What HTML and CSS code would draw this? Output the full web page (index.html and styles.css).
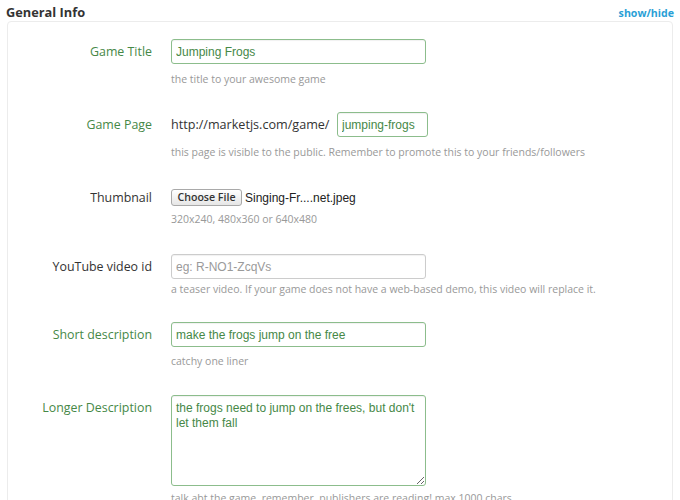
FILE: index.html
```html
<!DOCTYPE html>
<html>
<head>
<meta charset="utf-8">
<link rel="stylesheet" href="styles.css">
</head>
<body>
<div class="page">
  <div class="header">
    <h2 class="title">General Info</h2>
    <a class="toggle" href="#">show/hide</a>
  </div>
  <div class="panel">
    <div class="row">
      <label class="label ok">Game Title</label>
      <div class="control">
        <input class="field ok" type="text" value="Jumping Frogs">
        <div class="help h8">the title to your awesome game</div>
      </div>
    </div>
    <div class="row">
      <label class="label ok">Game Page</label>
      <div class="control">
        <div class="inline">
          <span class="prefix">http://marketjs.com/game/</span>
          <input class="field ok slug" type="text" value="jumping-frogs">
        </div>
        <div class="help h8">this page is visible to the public. Remember to promote this to your friends/followers</div>
      </div>
    </div>
    <div class="row">
      <label class="label">Thumbnail</label>
      <div class="control">
        <div class="file">
          <span class="filebtn">Choose File</span>
          <span class="filename">Singing-Fr....net.jpeg</span>
        </div>
        <div class="help h2">320x240, 480x360 or 640x480</div>
      </div>
    </div>
    <div class="row r28">
      <label class="label">YouTube video id</label>
      <div class="control">
        <input class="field" type="text" placeholder="eg: R-NO1-ZcqVs">
        <div class="help h3">a teaser video. If your game does not have a web-based demo, this video will replace it.</div>
      </div>
    </div>
    <div class="row">
      <label class="label ok">Short description</label>
      <div class="control">
        <input class="field ok" type="text" value="make the frogs jump on the free">
        <div class="help h7">catchy one liner</div>
      </div>
    </div>
    <div class="row r27">
      <label class="label ok">Longer Description</label>
      <div class="control">
        <textarea class="area ok">the frogs need to jump on the frees, but don't let them fall</textarea>
        <div class="help h5">talk abt the game. remember, publishers are reading! max 1000 chars</div>
      </div>
    </div>
  </div>
</div>
</body>
</html>
```
FILE: styles.css
```css
html, body {
  margin: 0;
  padding: 0;
  overflow: hidden;
  background: #fff;
}
.page {
  width: 680px;
  height: 500px;
  padding: 0 7px 0 6px;
  box-sizing: border-box;
  font-family: "Open Sans", "DejaVu Sans", sans-serif;
  color: #333;
}
.header {
  display: flex;
  justify-content: space-between;
  align-items: baseline;
  height: 21px;
  padding-top: 4px;
  box-sizing: border-box;
}
.title {
  margin: 0;
  font-size: 12.8px;
  line-height: 16px;
  font-weight: 700;
  color: #333;
}
.toggle {
  font-size: 10.6px;
  line-height: 16px;
  font-weight: 700;
  color: #2a9fd6;
  text-decoration: none;
  margin-right: -1px;
}
.panel {
  margin-left: 1px;
  border: 1px solid #ececec;
  border-radius: 4px;
  padding: 17px 0 40px 0;
  background: #fff;
}
.row {
  display: flex;
  align-items: flex-start;
  margin-top: 26px;
}
.row:first-child { margin-top: 0; }
.row.r28 { margin-top: 28px; }
.row.r27 { margin-top: 27px; }
.label {
  width: 144px;
  flex: none;
  text-align: right;
  font-size: 12.4px;
  line-height: 25px;
  color: #333;
}
.label.ok { color: #468847; }
.control {
  margin-left: 19px;
  display: flex;
  flex-direction: column;
}
.field {
  box-sizing: border-box;
  width: 255px;
  height: 25px;
  margin: 0;
  padding: 0 4px;
  border: 1px solid #cccccc;
  border-radius: 3px;
  box-shadow: inset 0 1px 1px rgba(0,0,0,0.06);
  font-family: "Liberation Sans", Arial, sans-serif;
  font-size: 12px;
  color: #333;
  outline: none;
}
.field::placeholder { color: #9a9a9a; }
.field.ok, .area.ok {
  border-color: #8cbd8c;
  color: #468847;
}
.inline {
  display: flex;
  align-items: center;
  height: 25px;
}
.prefix {
  font-size: 12.6px;
  color: #333;
  margin-right: 4px;
  width: 162px;
  white-space: nowrap;
}
.field.slug { width: 91px; }
.file {
  display: flex;
  align-items: center;
  height: 25px;
}
.filebtn {
  box-sizing: border-box;
  width: 71px;
  height: 17px;
  border: 1px solid #a9a9a9;
  border-radius: 3px;
  background: linear-gradient(#ffffff, #e6e6e6);
  font-size: 10.6px;
  font-weight: 600;
  line-height: 15px;
  text-align: center;
  color: #333;
}
.filename {
  margin-left: 3px;
  font-family: "Liberation Sans", Arial, sans-serif;
  font-size: 12px;
  color: #222;
}
.help {
  font-size: 10.5px;
  line-height: 14px;
  color: #999;
  white-space: nowrap;
}
.h8 { margin-top: 8px; }
.h7 { margin-top: 7px; }
.h5 { margin-top: 5px; }
.h3 { margin-top: 3px; }
.h2 { margin-top: 2px; }
.area {
  box-sizing: border-box;
  width: 255px;
  height: 91px;
  margin: 0;
  padding: 5px 4px;
  border: 1px solid #ccc;
  border-radius: 3px;
  box-shadow: inset 0 1px 1px rgba(0,0,0,0.06);
  font-family: "Liberation Sans", Arial, sans-serif;
  font-size: 12px;
  line-height: 15px;
  outline: none;
  overflow: hidden;
  display: block;
}
```
